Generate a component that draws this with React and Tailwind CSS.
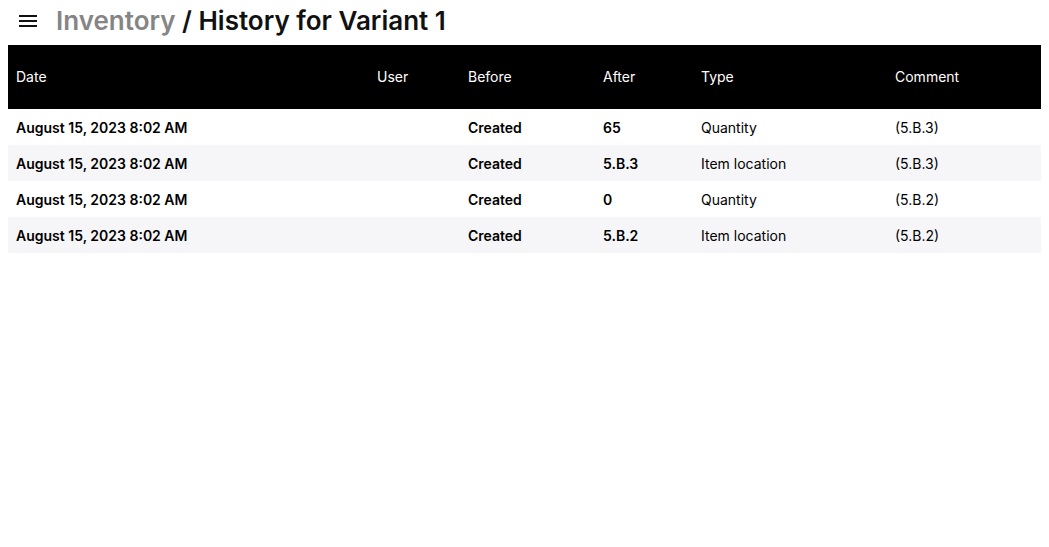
const columns = [
  { label: "Date", width: "w-[361px]" },
  { label: "User", width: "w-[91px]" },
  { label: "Before", width: "w-[135px]" },
  { label: "After", width: "w-[98px]" },
  { label: "Type", width: "w-[194px]" },
  { label: "Comment", width: "" },
];

const rows = [
  { date: "August 15, 2023 8:02 AM", user: "", before: "Created", after: "65", type: "Quantity", comment: "(5.B.3)" },
  { date: "August 15, 2023 8:02 AM", user: "", before: "Created", after: "5.B.3", type: "Item location", comment: "(5.B.3)" },
  { date: "August 15, 2023 8:02 AM", user: "", before: "Created", after: "0", type: "Quantity", comment: "(5.B.2)" },
  { date: "August 15, 2023 8:02 AM", user: "", before: "Created", after: "5.B.2", type: "Item location", comment: "(5.B.2)" },
];

function MenuIcon() {
  return (
    <svg width="24" height="24" viewBox="0 0 24 24" fill="currentColor">
      <path d="M3 18h18v-2H3v2zm0-5h18v-2H3v2zm0-7v2h18V6H3z" />
    </svg>
  );
}

export default function App() {
  return (
    <div className="min-h-screen bg-white px-2 text-black" style={{ fontFamily: "Inter, 'Noto Sans', sans-serif" }}>
      <header className="flex h-[45px] items-center gap-[16px] pb-1 pl-[8px]">
        <button className="flex h-6 w-6 items-center justify-center text-[#111]">
          <MenuIcon />
        </button>
        <h1 className="text-[26px] font-semibold leading-none">
          <span className="text-[#858585]">Inventory</span>
          <span className="text-[#111]"> / History for Variant 1</span>
        </h1>
      </header>

      <table className="w-full table-fixed border-collapse text-[14px]">
        <thead>
          <tr className="h-[64px] bg-black text-white">
            {columns.map((col) => (
              <th key={col.label} className={`${col.width} px-2 pb-px text-left font-normal`}>
                {col.label}
              </th>
            ))}
          </tr>
        </thead>
        <tbody>
          {rows.map((row, i) => (
            <tr key={i} className={`h-[36px] ${i % 2 === 1 ? "bg-[#f6f6f8]" : "bg-white"}`}>
              <td className="px-2 font-semibold">{row.date}</td>
              <td className="px-2">{row.user}</td>
              <td className="px-2 font-semibold">{row.before}</td>
              <td className="px-2 font-semibold">{row.after}</td>
              <td className="px-2">{row.type}</td>
              <td className="px-2">{row.comment}</td>
            </tr>
          ))}
        </tbody>
      </table>
    </div>
  );
}
